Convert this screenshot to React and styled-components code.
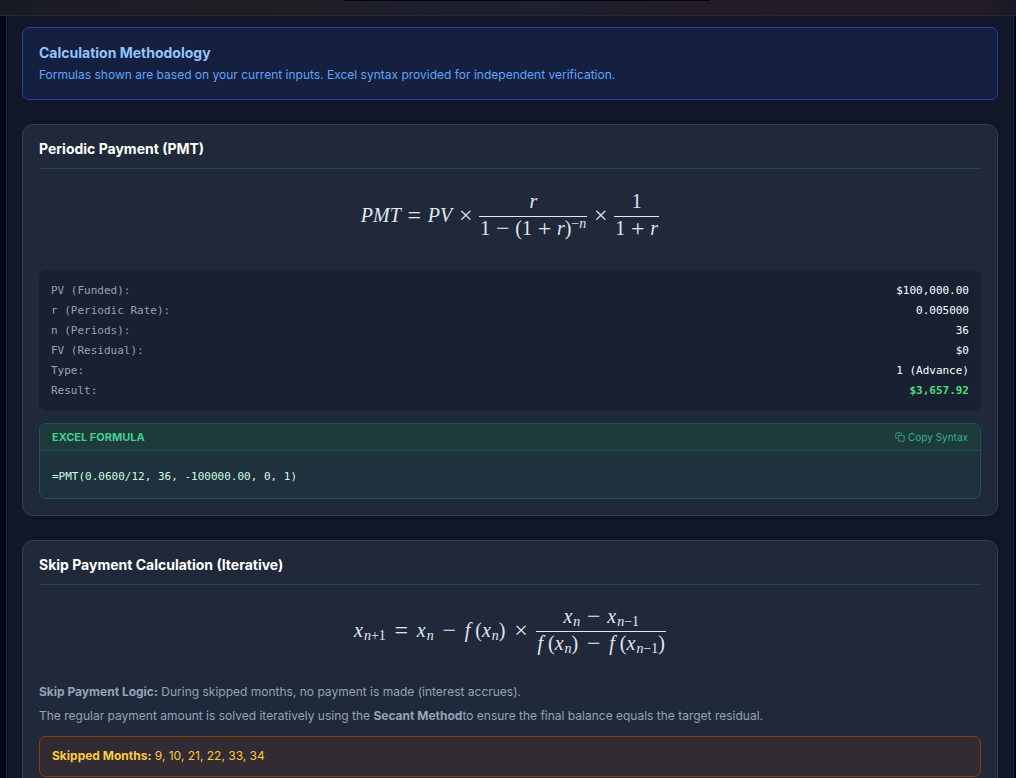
import React from "react";
import styled, { createGlobalStyle } from "styled-components";
import { Copy } from "lucide-react";

const GlobalStyle = createGlobalStyle`
  * {
    box-sizing: border-box;
  }
  body {
    margin: 0;
    background: #020617;
    color: #94a3b8;
    font-family: "Inter", "Liberation Sans", sans-serif;
    font-size: 12px;
    line-height: 18px;
  }
  h2, h3, h4, p, dl, dd, pre {
    margin: 0;
  }
`;

const TopBar = styled.header`
  display: flex;
  justify-content: center;
  height: 16px;
  border-bottom: 1px solid #2a2731;
  background: linear-gradient(
    90deg,
    #171b25 0%,
    #1f1c25 14%,
    #201d24 30%,
    #1d1f2e 42%,
    #1d202f 54%,
    #211d26 66%,
    #241d27 96%,
    #181827 100%
  );
`;
const TabTray = styled.div`
  width: 36%;
  height: 1px;
  margin-left: 38px;
  background: #020617;
`;

const Page = styled.div`
  padding: 0 2px 0 6px;
`;
const Panel = styled.main`
  display: flex;
  flex-direction: column;
  gap: 24px;
  padding: 11px 15px 24px;
  border: 1px solid #1e2536;
  border-top: 0;
  background: #111729;
`;

const Banner = styled.section`
  display: flex;
  flex-direction: column;
  gap: 4px;
  padding: 16px 16px 15px;
  border: 1px solid #2541a8;
  border-radius: 7px;
  background: #151f3f;
  color: #60a5fa;
`;
const BannerTitle = styled.h2`
  color: #93c5fd;
  font-size: 14px;
  line-height: 18px;
  font-weight: 700;
`;

const Card = styled.section`
  padding: 16px;
  border: 1px solid #334155;
  border-radius: 11px;
  background: #1f293a;
`;
const CardTitle = styled.h3`
  padding-bottom: 11px;
  border-bottom: 1px solid #334155;
  color: #fff;
  font-size: 14px;
  line-height: 16px;
  font-weight: 700;
`;

const Formula = styled.div`
  display: flex;
  align-items: center;
  justify-content: center;
  gap: ${props => (props.$compact ? "8px" : "6px")};
  height: ${props => (props.$compact ? "98px" : "101px")};
  padding-bottom: ${props => (props.$compact ? "9px" : "10px")};
  color: #e2e8f0;
  font-family: "Liberation Serif", serif;
  font-size: 20px;
  line-height: 24px;
`;
const Fraction = styled.span`
  display: inline-flex;
  flex-direction: column;
  align-items: stretch;
`;
const Numerator = styled.span`
  display: inline-flex;
  justify-content: center;
  gap: 6px;
  padding: 0 1px 3px;
`;
const Denominator = styled.span`
  display: inline-flex;
  justify-content: center;
  gap: ${props => (props.$wide ? "8px" : "5px")};
  padding: 0 1px 2px;
  border-top: 1px solid #e2e8f0;
  line-height: 22px;
`;
const Op = styled.span`
  width: 15px;
  font-size: 24px;
  text-align: center;
`;
const Var = styled.var`
  font-style: italic;
`;
const Fn = styled(Var)`
  margin-right: 5px;
`;
const Sub = styled.sub`
  margin-left: 1px;
  font-size: 14px;
  line-height: 0;
  vertical-align: -3px;
`;
const Sup = styled.sup`
  font-size: 14px;
  line-height: 0;
  vertical-align: 7px;
`;

const Values = styled.dl`
  padding: 11px 12px 10px;
  border-radius: 7px;
  background: #182031;
  font-family: "DejaVu Sans Mono", monospace;
  font-size: 11px;
  line-height: 20px;
`;
const ValueRow = styled.div`
  display: flex;
  justify-content: space-between;
`;
const Value = styled.dd`
  color: ${props => (props.$result ? "#4ade80" : "#fff")};
  font-weight: ${props => (props.$result ? 700 : 400)};
`;

const Excel = styled.div`
  margin-top: 12px;
  border: 1px solid #23514c;
  border-radius: 7px;
  background: #1f313c;
  overflow: hidden;
`;
const ExcelHeader = styled.div`
  display: flex;
  align-items: center;
  justify-content: space-between;
  height: 27px;
  padding: 0 12px;
  border-bottom: 1px solid #23514c;
  background: #1d3a3d;
`;
const ExcelTitle = styled.h4`
  color: #43cf8b;
  font-size: 11px;
  font-weight: 700;
  text-transform: uppercase;
`;
const CopyButton = styled.button`
  display: flex;
  align-items: center;
  gap: 3px;
  padding: 0;
  border: 0;
  background: none;
  color: #34b47c;
  font-family: inherit;
  font-size: 10px;
  cursor: pointer;
`;
const ExcelCode = styled.pre`
  padding: 17px 12px 13px;
  color: #d1fae5;
  font-family: "DejaVu Sans Mono", monospace;
  font-size: 11px;
  line-height: 17px;
`;

const Notes = styled.div`
  display: flex;
  flex-direction: column;
  gap: 6px;
`;
const Skipped = styled.p`
  margin-top: 11px;
  padding: 10px 12px 11px;
  border: 1px solid #8a3f0f;
  border-radius: 7px;
  background: #322b33;
  color: #facc3f;
`;

const pmtValues = [
  { label: "PV (Funded):", value: "$100,000.00" },
  { label: "r (Periodic Rate):", value: "0.005000" },
  { label: "n (Periods):", value: "36" },
  { label: "FV (Residual):", value: "$0" },
  { label: "Type:", value: "1 (Advance)" },
  { label: "Result:", value: "$3,657.92", result: true }
];
const skippedMonths = [9, 10, 21, 22, 33, 34];

const XN = () => (
  <span>
    <Var>x</Var>
    <Sub>
      <Var>n</Var>
    </Sub>
  </span>
);

const XPrev = () => (
  <span>
    <Var>x</Var>
    <Sub>
      <Var>n</Var>−1
    </Sub>
  </span>
);

const PmtFormula = () => (
  <Formula>
    <Var>PMT</Var>
    <Op>=</Op>
    <Var>PV</Var>
    <Op>×</Op>
    <Fraction>
      <Numerator>
        <Var>r</Var>
      </Numerator>
      <Denominator>
        <span>1</span>
        <Op>−</Op>
        <span>(1</span>
        <Op>+</Op>
        <span>
          <Var>r</Var>)
          <Sup>
            −<Var>n</Var>
          </Sup>
        </span>
      </Denominator>
    </Fraction>
    <Op>×</Op>
    <Fraction>
      <Numerator>1</Numerator>
      <Denominator>
        <span>1</span>
        <Op>+</Op>
        <Var>r</Var>
      </Denominator>
    </Fraction>
  </Formula>
);

const SecantFormula = () => (
  <Formula $compact>
    <span>
      <Var>x</Var>
      <Sub>
        <Var>n</Var>+1
      </Sub>
    </span>
    <Op>=</Op>
    <XN />
    <Op>−</Op>
    <span>
      <Fn>f</Fn>(<XN />)
    </span>
    <Op>×</Op>
    <Fraction>
      <Numerator>
        <XN />
        <Op>−</Op>
        <XPrev />
      </Numerator>
      <Denominator $wide>
        <span>
          <Fn>f</Fn>(<XN />)
        </span>
        <Op>−</Op>
        <span>
          <Fn>f</Fn>(<XPrev />)
        </span>
      </Denominator>
    </Fraction>
  </Formula>
);

const App = () => {
  return (
    <>
      <GlobalStyle />
      <TopBar>
        <TabTray />
      </TopBar>
      <Page>
        <Panel>
          <Banner>
            <BannerTitle>Calculation Methodology</BannerTitle>
            <p>
              Formulas shown are based on your current inputs. Excel syntax
              provided for independent verification.
            </p>
          </Banner>

          <Card>
            <CardTitle>Periodic Payment (PMT)</CardTitle>
            <PmtFormula />
            <Values>
              {pmtValues.map(({ label, value, result }) => (
                <ValueRow key={label}>
                  <dt>{label}</dt>
                  <Value $result={result}>{value}</Value>
                </ValueRow>
              ))}
            </Values>
            <Excel>
              <ExcelHeader>
                <ExcelTitle>Excel Formula</ExcelTitle>
                <CopyButton type="button">
                  <Copy size={10} />
                  Copy Syntax
                </CopyButton>
              </ExcelHeader>
              <ExcelCode>=PMT(0.0600/12, 36, -100000.00, 0, 1)</ExcelCode>
            </Excel>
          </Card>

          <Card>
            <CardTitle>Skip Payment Calculation (Iterative)</CardTitle>
            <SecantFormula />
            <Notes>
              <p>
                <strong>Skip Payment Logic:</strong> During skipped months, no
                payment is made (interest accrues).
              </p>
              <p>
                The regular payment amount is solved iteratively using the{" "}
                <strong>Secant Method</strong>to ensure the final balance equals
                the target residual.
              </p>
            </Notes>
            <Skipped>
              <strong>Skipped Months:</strong> {skippedMonths.join(", ")}
            </Skipped>
          </Card>
        </Panel>
      </Page>
    </>
  );
};

export default App;
